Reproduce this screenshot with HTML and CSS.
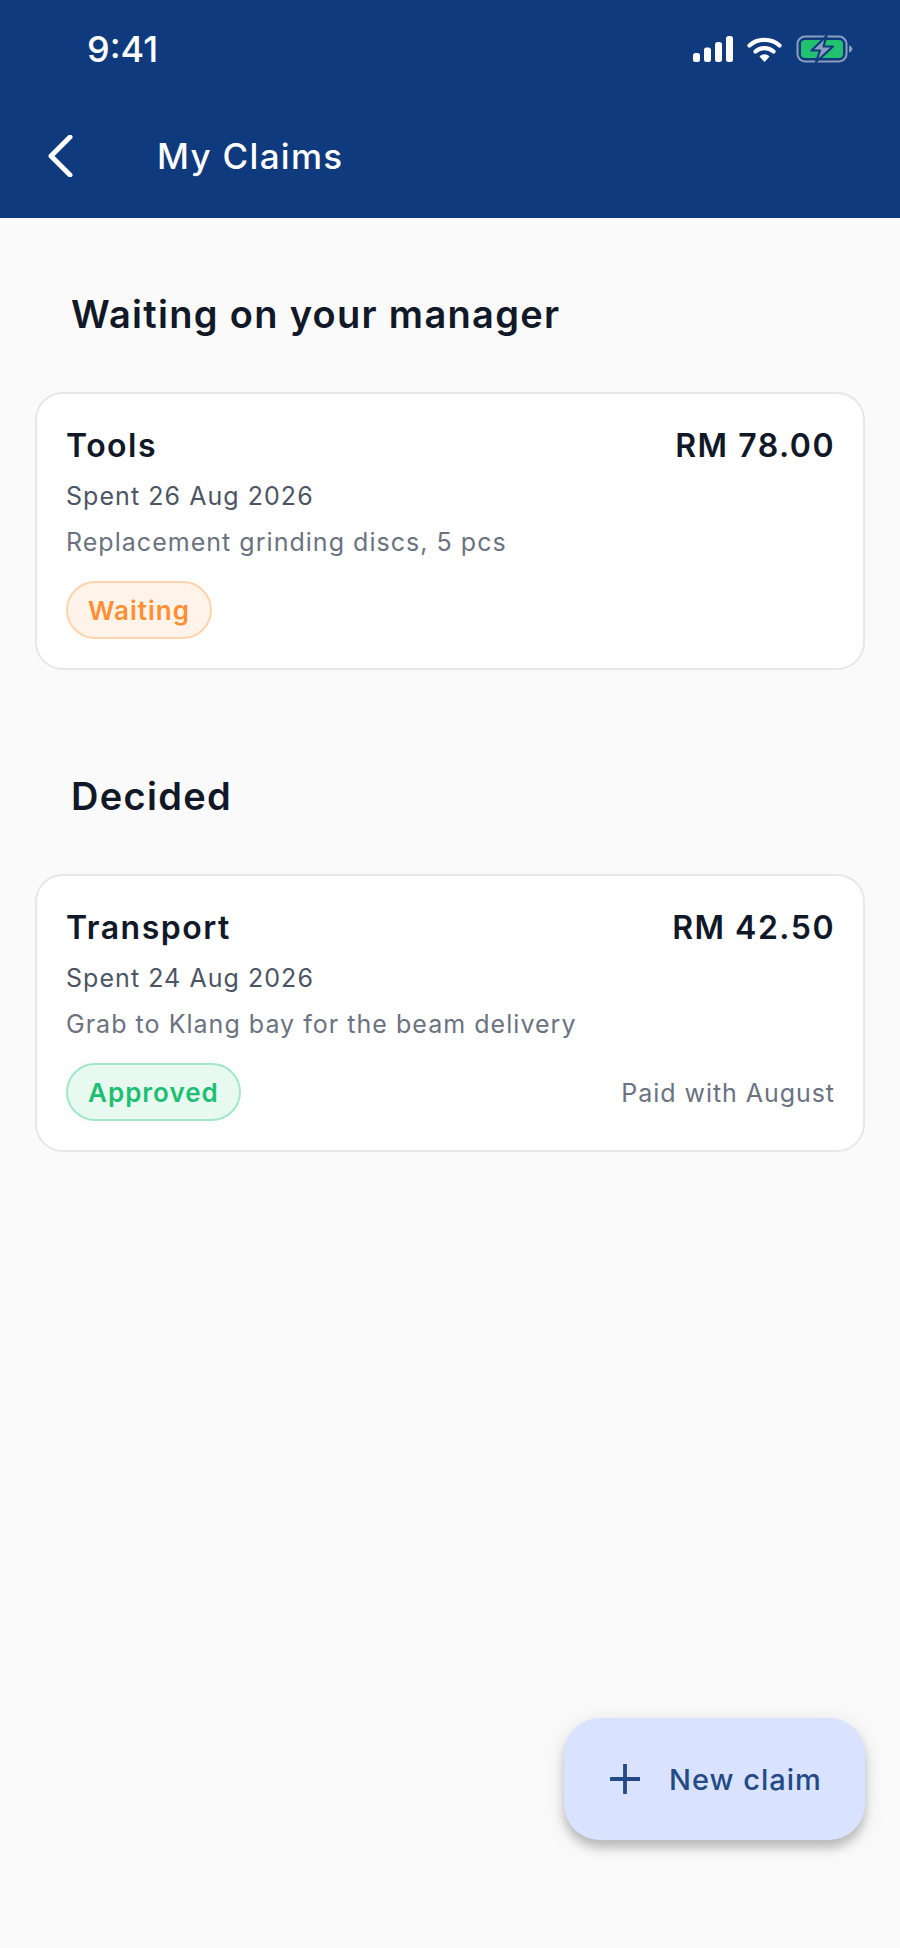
FILE: index.html
```html
<!DOCTYPE html>
<html lang="en">
<head>
<meta charset="utf-8">
<title>My Claims</title>
<link rel="stylesheet" href="styles.css">
</head>
<body>
<div class="screen">
  <header class="appbar">
    <div class="status">
      <span class="time">9:41</span>
      <div class="status-icons">
        <svg class="sig" width="40" height="26" viewBox="0 0 40 26"><rect x="0" y="17" width="7" height="9" rx="2.5" fill="#fff"/><rect x="11" y="11.500" width="7" height="14.500" rx="2.500" fill="#fff"/><rect x="22" y="6" width="7" height="20" rx="2.500" fill="#fff"/><rect x="33" y="0" width="7" height="26" rx="2.500" fill="#fff"/></svg>
        <svg class="wifi" width="35" height="26" viewBox="0 0 35 26"><path d="M2.500 9.500C10.500 2 24.500 2 32.500 9.500" fill="none" stroke="#fff" stroke-width="4.200" stroke-linecap="round"/><path d="M8.500 15.500C13.500 11 21.500 11 26.500 15.500" fill="none" stroke="#fff" stroke-width="4.200" stroke-linecap="round"/><path d="M12.500 20.500C15.500 17.500 19.500 17.500 22.500 20.500L17.500 26Z" fill="#fff"/></svg>
        <svg class="batt" width="58" height="28" viewBox="0 0 58 28"><rect x="1.500" y="1.500" width="49" height="25" rx="7.500" fill="none" stroke="#8c9dbd" stroke-width="2"/><rect x="5" y="5" width="42" height="18" rx="4" fill="#22c16f"/><path d="M53 10.500c2 .6 3.500 2 3.500 3.500s-1.500 2.900-3.500 3.500z" fill="#8c9dbd"/><path d="M30.500 1 15.500 15.500H24L20 27 37 11.500H27.500Z" fill="#8c9dbd" stroke="#0f3a7d" stroke-width="2.200" stroke-linejoin="round"/></svg>
      </div>
    </div>
    <div class="navrow">
      <svg class="back" width="26" height="42" viewBox="0 0 26 42"><path d="M23 2 4 21 23 40" fill="none" stroke="#fff" stroke-width="5" stroke-linecap="round" stroke-linejoin="round"/></svg>
      <h1 class="title">My Claims</h1>
    </div>
  </header>

  <main class="content">
    <section class="section">
      <h2 class="section-title">Waiting on your manager</h2>
      <article class="card">
        <div class="row">
          <span class="name">Tools</span>
          <span class="amount">RM 78.00</span>
        </div>
        <p class="spent">Spent 26 Aug 2026</p>
        <p class="desc">Replacement grinding discs, 5 pcs</p>
        <div class="row foot">
          <span class="chip chip-wait">Waiting</span>
        </div>
      </article>
    </section>
    <section class="section">
      <h2 class="section-title">Decided</h2>
      <article class="card">
        <div class="row">
          <span class="name">Transport</span>
          <span class="amount">RM 42.50</span>
        </div>
        <p class="spent">Spent 24 Aug 2026</p>
        <p class="desc">Grab to Klang bay for the beam delivery</p>
        <div class="row foot">
          <span class="chip chip-ok">Approved</span>
          <span class="paid">Paid with August</span>
        </div>
      </article>
    </section>
  </main>

  <button class="fab" type="button">
    <svg width="32" height="32" viewBox="0 0 32 32"><path d="M16 1V31M1 16H31" fill="none" stroke="#234a85" stroke-width="3.800"/></svg>
    <span>New claim</span>
  </button>
</div>
</body>
</html>
```

FILE: styles.css
```css
* { box-sizing: border-box; }
html, body { margin: 0; padding: 0; }
body { font-family: Inter, "Noto Sans", sans-serif; background: #fafafa; color: #111827; }
.screen { position: relative; width: 900px; height: 1948px; overflow: hidden; background: #fafafa; }
.appbar { height: 218px; background: #0f3a7d; color: #fff; }
.status { height: 98px; display: flex; justify-content: space-between; align-items: center; padding: 0 46px 0 87px; }
.time { font-size: 36px; font-weight: 500; line-height: 1; }
.status-icons { display: flex; align-items: center; gap: 14px; }
.navrow { display: flex; align-items: center; height: 120px; padding: 0 0 4px 47px; gap: 84px; }
.title { margin: 0; font-size: 35px; font-weight: 500; letter-spacing: 1.3px; }
.content { padding: 74px 35px 0; }
.section { margin-bottom: 104px; }
.section-title { margin: 0 0 56px 36px; font-size: 38px; line-height: 44px; font-weight: 600; letter-spacing: 1.3px; color: #111827; }
.card { background: #fff; border: 2px solid #e5e7eb; border-radius: 28px; padding: 32px 28px 28px 29px; height: 278px; }
.row { display: flex; justify-content: space-between; align-items: center; }
.name, .amount { font-size: 32px; line-height: 40px; font-weight: 600; letter-spacing: 1.5px; color: #111827; }
.spent { margin: 12px 0 0; font-size: 25px; line-height: 36px; letter-spacing: 1.05px; color: #4b5563; }
.desc { margin: 10px 0 0; font-size: 25px; line-height: 36px; letter-spacing: 1.03px; color: #6b7280; }
.foot { margin-top: 21px; }
.chip { display: inline-flex; align-items: center; height: 58px; padding: 0 20px; border-radius: 29px; border: 2px solid; font-size: 26px; font-weight: 600; letter-spacing: 1px; }
.chip-wait { background: #fff3ea; border-color: #ffd3ae; color: #ff8f33; }
.chip-ok { background: #e8f9f1; border-color: #a3e6c8; color: #1dbf73; }
.paid { padding-top: 2px; font-size: 25px; letter-spacing: 0.95px; color: #6b7280; }
.fab { position: absolute; left: 564px; top: 1718px; width: 301px; height: 122px; display: flex; align-items: center; gap: 28px; padding: 0 0 0 45px; border: 0; border-radius: 36px; background: #d9e2ff; color: #234a85; font-family: inherit; font-size: 29px; font-weight: 450; letter-spacing: 1px; box-shadow: 0 8px 10px rgba(0,0,0,.2), 0 4px 24px rgba(0,0,0,.1); }
```
